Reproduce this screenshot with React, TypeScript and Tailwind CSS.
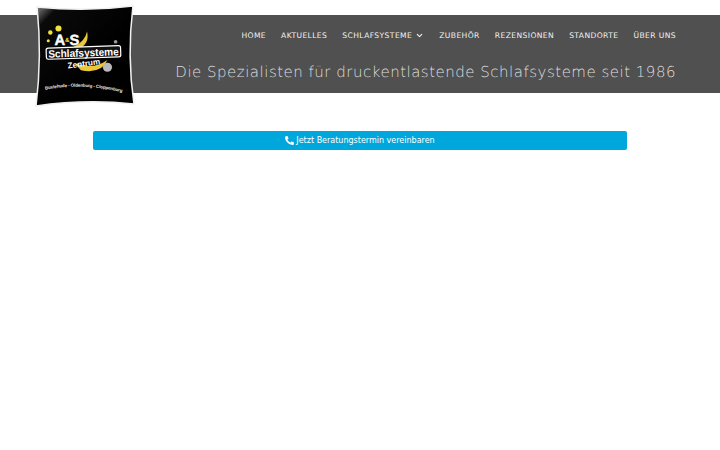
import { ChevronDown } from "lucide-react";

const navItems = ["HOME", "AKTUELLES", "SCHLAFSYSTEME", "ZUBEHÖR", "REZENSIONEN", "STANDORTE", "ÜBER UNS"];

function Logo() {
  return (
    <svg viewBox="0 0 100 100" className="w-[102px] h-[102px]" style={{ fontFamily: "'Liberation Sans', sans-serif" }}>
      <defs>
        <linearGradient id="shine" x1="0" y1="0" x2="0.6" y2="0.6">
          <stop offset="0" stopColor="#8a8a8a" />
          <stop offset="0.2" stopColor="#0a0a0a" />
          <stop offset="1" stopColor="#000" />
        </linearGradient>
        <path id="cities" d="M11 83 Q48 76 88 86" />
      </defs>
      <path d="M3 2 Q50 7 97 1 Q91 50 98 97 Q50 92 2 99 Q8 50 3 2Z" fill="url(#shine)" stroke="#f0f0f0" strokeWidth="1.5" />
      {/* stars */}
      <circle cx="24" cy="23" r="3" fill="#f4e23c" />
      <circle cx="16" cy="27" r="2.2" fill="#f4e23c" />
      <circle cx="14" cy="35" r="1.5" fill="#f4e23c" />
      {/* moon */}
      <path d="M39 41 Q50 36 52 26 Q55 38 43 44Z" fill="#e9c93a" />
      <path d="M40 57 Q58 64 72 54 Q66 68 46 64Z" fill="#e9c93a" />
      <circle cx="72" cy="61" r="4.5" fill="#b9b9b9" />
      <circle cx="80" cy="36" r="1.8" fill="#999" />
      <text x="20" y="39.5" fill="#fff" fontSize="14.5" fontWeight="700" stroke="#fff" strokeWidth="0.4">A<tspan fill="#f4e23c" stroke="none" fontSize="6" dy="-3">&amp;</tspan><tspan dy="3">S</tspan></text>
      <g transform="rotate(-2 48 47)">
        <rect x="12" y="41" width="73" height="11" rx="2" fill="#111" stroke="#fff" strokeWidth="1.2" />
        <text x="48.5" y="50.5" textAnchor="middle" fill="#fff" fontSize="10.5" fontWeight="700" textLength="69" lengthAdjust="spacingAndGlyphs">Schlafsysteme</text>
      </g>
      <g transform="rotate(-8 50 58)">
        <text x="49" y="60" textAnchor="middle" fill="#fff" fontSize="8" fontWeight="700">Zentrum</text>
      </g>
      <text fill="#e8e8e8" fontSize="4.4" fontWeight="700">
        <textPath href="#cities" textLength="76">Buxtehude - Oldenburg - Cloppenburg</textPath>
      </text>
    </svg>
  );
}

function PhoneIcon() {
  return (
    <svg viewBox="0 0 512 512" className="w-[9px] h-[9px] fill-white -scale-x-100">
      <path d="M493 24 389 0c-11-3-23 3-27 14l-48 112c-4 10-1 21 7 28l61 50c-36 76-98 139-176 176l-50-61c-7-8-18-11-28-7L14 360c-11 5-17 17-14 28l24 104c3 11 12 20 24 20 256 0 464-207 464-464 0-12-8-21-19-24z" />
    </svg>
  );
}

export default function App() {
  return (
    <div className="min-h-[450px] bg-white pt-[15px] font-['DejaVu_Sans',sans-serif] [text-rendering:geometricPrecision]">
      {/* Header */}
      <header className="relative h-[78px] bg-[#505050] pr-[44px] pt-[14px]">
        <div className="absolute left-[34px] top-[-10px]">
          <Logo />
        </div>
        <nav className="flex justify-end gap-[15px] h-[11px] mt-[1px] items-center text-[7.6px] tracking-[0.4px] text-[#f2f2f2] leading-none">
          {navItems.map((item) => (
            <span key={item} className="flex items-center gap-[3px] whitespace-nowrap">
              {item}
              {item === "SCHLAFSYSTEME" && <ChevronDown size={9} strokeWidth={3} />}
            </span>
          ))}
        </nav>
        <p className="mt-[19px] text-right text-[15px] leading-[24px] tracking-[0.5px] font-light text-[#dedede] whitespace-nowrap">
          Die Spezialisten für druckentlastende Schlafsysteme seit 1986
        </p>
      </header>

      {/* Termin Button */}
      <div className="px-[93px] pt-[38px]">
        <button className="w-full h-[19px] rounded-[2px] bg-[#00a7dc] text-white text-[8px] flex items-center justify-center gap-[2px]">
          <PhoneIcon />
          Jetzt Beratungstermin vereinbaren
        </button>
      </div>
    </div>
  );
}
